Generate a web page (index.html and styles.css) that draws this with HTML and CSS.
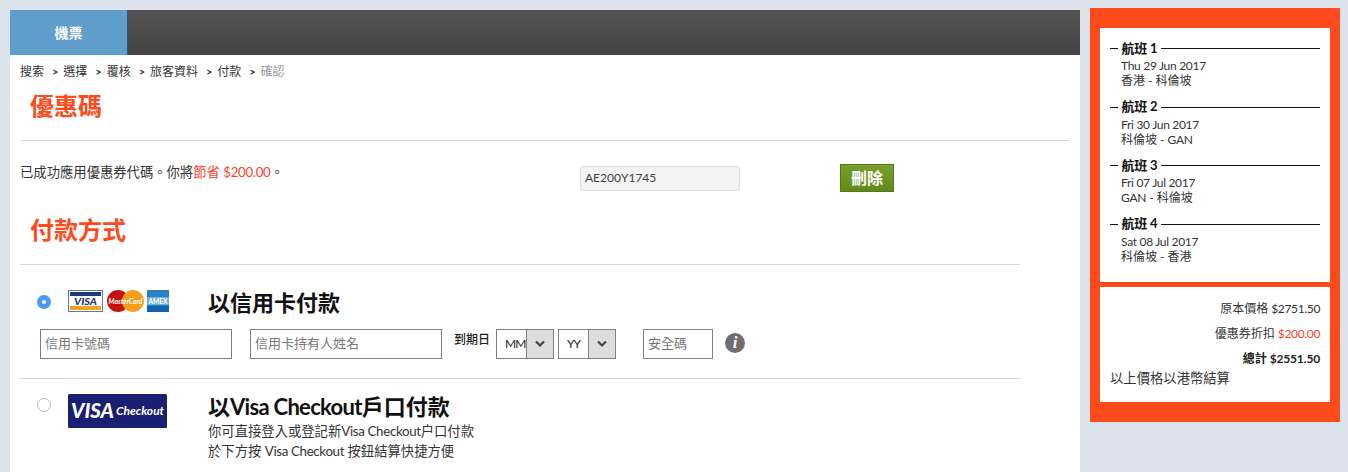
FILE: index.html
```html
<!DOCTYPE html>
<html lang="zh-Hant">
<head>
<meta charset="utf-8">
<title>付款</title>
<link rel="stylesheet" href="styles.css">
</head>
<body>
<div class="page">
  <main class="main">
    <nav class="tabs"><div class="tab">機票</div></nav>
    <div class="content">
      <ol class="crumbs">
        <li>搜索</li><li class="sep">&gt;</li><li>選擇</li><li class="sep">&gt;</li><li>覆核</li><li class="sep">&gt;</li><li>旅客資料</li><li class="sep">&gt;</li><li>付款</li><li class="sep">&gt;</li><li class="muted">確認</li>
      </ol>
      <h2 class="section-title title-coupon">優惠碼</h2>
      <hr class="rule rule-wide">
      <div class="coupon">
        <p class="coupon-msg">已成功應用優惠券代碼。你將<span class="red">節省 <span class="amt">$200.00</span></span>。</p>
        <div class="coupon-code">AE200Y1745</div>
        <button class="remove" type="button">刪除</button>
      </div>
      <h2 class="section-title title-pay">付款方式</h2>
      <hr class="rule">
      <section class="method method-card">
        <span class="radio radio-on"></span>
        <div class="logos">
          <svg width="35" height="22" viewBox="0 0 35 22"><rect width="35" height="22" fill="#fff"/><rect x=".5" y=".5" width="34" height="21" fill="none" stroke="#6b7590"/><rect x="2" y="2" width="31" height="4" fill="#1a3a78"/><rect x="2" y="16" width="31" height="4" fill="#f7a11c"/><text x="6" y="14.8" textLength="23" lengthAdjust="spacingAndGlyphs" class="visa-small">VISA</text></svg>
          <svg class="logo-mc" width="37" height="22" viewBox="0 0 37 22"><circle cx="11" cy="11" r="11" fill="#c4120c"/><circle cx="26" cy="11" r="11" fill="#f69e1d"/><text x="1.5" y="14" textLength="34" lengthAdjust="spacingAndGlyphs" class="mc-text">MasterCard</text></svg>
          <svg width="22" height="22" viewBox="0 0 22 22"><rect width="22" height="22" fill="#2a7fc0"/><rect y="7" width="22" height="8" fill="#6fb0dc"/><rect y="16" width="22" height="6" fill="#0f63a8"/><text x="1.5" y="13.8" textLength="19" lengthAdjust="spacingAndGlyphs" class="amex-text">AMEX</text></svg>
        </div>
        <div class="method-title">以信用卡付款</div>
      </section>
      <div class="card-form">
        <div class="field field-long">信用卡號碼</div>
        <div class="field field-long">信用卡持有人姓名</div>
        <span class="expiry-label">到期日</span>
        <div class="select"><span class="select-value">MM</span><span class="select-btn"><svg width="12" height="8" viewBox="0 0 12 8"><path d="M2 1.5l4 4 4-4" fill="none" stroke="#444" stroke-width="2.2"/></svg></span></div>
        <div class="select"><span class="select-value">YY</span><span class="select-btn"><svg width="12" height="8" viewBox="0 0 12 8"><path d="M2 1.5l4 4 4-4" fill="none" stroke="#444" stroke-width="2.2"/></svg></span></div>
        <div class="field field-cvv">安全碼</div>
        <span class="info">i</span>
      </div>
      <hr class="rule">
      <section class="method method-visa">
        <span class="radio"></span>
        <div class="logos">
          <svg width="99" height="34" viewBox="0 0 99 34"><rect width="99" height="34" rx="1.5" fill="#1a1f71"/><text x="3" y="23.5" textLength="43" lengthAdjust="spacingAndGlyphs" class="vc-visa">VISA</text><text x="48" y="20.5" textLength="48" lengthAdjust="spacingAndGlyphs" class="vc-check">Checkout</text></svg>
        </div>
        <div class="method-body">
          <div class="method-title">以<span class="latin-title">Visa Checkout</span>戶口付款</div>
          <p class="method-note">你可直接登入或登記新<span class="latin">Visa Checkout</span>户口付款</p>
          <p class="method-note">於下方按 <span class="latin">Visa Checkout</span> 按鈕結算快捷方便</p>
        </div>
      </section>
    </div>
  </main>
  <aside class="side">
    <div class="panel panel-legs">
      <div class="leg">
        <div class="leg-head"><span class="dash"></span><b>航班 1</b><span class="line"></span></div>
        <div class="leg-info"><span class="date">Thu 29 Jun 2017</span></div><div class="leg-info">香港 - 科倫坡</div>
      </div>
      <div class="leg">
        <div class="leg-head"><span class="dash"></span><b>航班 2</b><span class="line"></span></div>
        <div class="leg-info"><span class="date">Fri 30 Jun 2017</span></div><div class="leg-info">科倫坡 - <span class="date">GAN</span></div>
      </div>
      <div class="leg">
        <div class="leg-head"><span class="dash"></span><b>航班 3</b><span class="line"></span></div>
        <div class="leg-info"><span class="date">Fri 07 Jul 2017</span></div><div class="leg-info"><span class="date">GAN</span> - 科倫坡</div>
      </div>
      <div class="leg">
        <div class="leg-head"><span class="dash"></span><b>航班 4</b><span class="line"></span></div>
        <div class="leg-info"><span class="date">Sat 08 Jul 2017</span></div><div class="leg-info">科倫坡 - 香港</div>
      </div>
    </div>
    <div class="panel panel-price">
      <div class="price">原本價格 <span class="amt">$2751.50</span></div>
      <div class="price">優惠券折扣 <span class="red amt">$200.00</span></div>
      <div class="price price-total">總計 <span class="amt">$2551.50</span></div>
      <div class="price-note">以上價格以港幣結算</div>
    </div>
  </aside>
</div>
</body>
</html>
```
FILE: styles.css
```css
* { box-sizing: border-box; }
html, body { margin: 0; height: 472px; overflow: hidden; }
body {
  background: #dce3ea;
  color: #333;
  font: 12px/15px Lato, "Noto Sans CJK TC", sans-serif;
}
.page { display: flex; align-items: flex-start; padding-left: 10px; gap: 10px; }
.main { width: 1070px; height: 472px; margin-top: 10px; background: #fff; flex: none; }
.tabs { height: 45px; background: linear-gradient(#525352, #434445); }
.tab {
  width: 118px; height: 45px; background: #5f9ecb; border-right: 1px solid #2f5775;
  color: #fff; font-weight: 700; font-size: 14px; line-height: 45px; text-align: center;
}
.content { padding: 0 10px; }
.crumbs { display: flex; list-style: none; margin: 0; padding: 9px 0 0; line-height: 15px; color: #333; }
.crumbs .sep { width: 19.3px; padding-left: 8px; font-weight: 700; font-size: 11px; }
.crumbs .muted { color: #999; }
.section-title {
  margin: 0; padding-left: 10px; color: #ff4a1c; font-size: 24px; line-height: 30px; font-weight: 700;
}
.title-coupon { margin-top: 12px; }
.title-pay { margin-top: 22px; }
.rule { width: 1000px; height: 1px; border: 0; margin: 0; background: #d5d6d7; }
.rule-wide { width: 1050px; margin-top: 19px; }
.title-pay + .rule { margin-top: 19px; }
.coupon { display: flex; align-items: flex-start; height: 52px; padding-top: 23px; }
.coupon-msg { width: 560px; margin: 0; font-size: 13.33px; line-height: 17px; flex: none; }
.red { color: #fb3f2e; }
.amt { letter-spacing: -.35px; }
.coupon-code {
  width: 160px; height: 25px; margin-top: 2px; padding-left: 4px;
  background: #f3f3f3; border: 1px solid #ddd; border-radius: 3px; line-height: 21px; color: #444; flex: none;
}
.remove {
  width: 54px; height: 28px; margin-left: 100px; padding: 0; flex: none;
  background: linear-gradient(#789f2c, #5f8a1a); border: 1px solid #54771a; color: #fff;
  font: 700 16px/24px Lato, "Noto Sans CJK TC", sans-serif;
}
.method { display: flex; padding-left: 17px; }
.method-card { height: 64px; padding-top: 25px; }
.method-visa { padding-top: 15px; height: 93px; }
.radio {
  width: 14px; height: 14px; margin-top: 4px; border-radius: 50%; background: #fff; border: 1px solid #b8b8b8; flex: none;
}
.radio-on { margin-top: 5px; border: 5px solid #4a9afc; }
.logos { display: flex; gap: 4px; width: 140px; margin-left: 17px; flex: none; }
.logos svg { flex: none; }
.logo-mc { margin-right: -1px; }
.method-title { color: #111; font-weight: 700; font-size: 22px; line-height: 28px; }
.method-card .method-title { margin-top: -1px; }
.latin-title { letter-spacing: -.7px; }
.method-note { margin: 0; font-size: 13.33px; line-height: 20px; color: #333; }
.latin { letter-spacing: -.35px; }
.method-body { margin-top: -1px; }
.visa-small { font: italic 900 10px Lato, sans-serif; fill: #1a3a78; }
.mc-text { font: italic 700 7px Lato, sans-serif; fill: #fff; }
.amex-text { font: 700 7.5px Lato, sans-serif; fill: #fff; }
.vc-visa { font: italic 900 20px Lato, sans-serif; fill: #fff; }
.vc-check { font: italic 700 12px Lato, sans-serif; fill: #fff; }
.card-form { display: flex; align-items: flex-start; height: 49px; padding-left: 20px; }
.field {
  height: 30px; padding-left: 4px; border: 1px solid #808080; color: #777; background: #fff;
  font-size: 13px; line-height: 27px; flex: none;
}
.field-long { width: 192px; margin-right: 18px; }
.field-long + .expiry-label { margin-left: -6px; }
.expiry-label { width: 42px; margin-top: 3px; color: #222; line-height: 15px; font-weight: 500; flex: none; }
.select { display: flex; width: 58px; height: 30px; margin-right: 4px; border: 1px solid #808080; flex: none; color: #222; }
.select-value { flex: 1; padding-left: 8px; line-height: 28px; letter-spacing: -1px; }
.select-btn { display: flex; width: 27px; align-items: center; justify-content: center; background: #ddd; border-left: 1px solid #808080; flex: none; }
.select + .field-cvv { margin-left: 23px; }
.field-cvv { width: 70px; }
.info {
  width: 20px; height: 20px; margin: 4px 0 0 12px; border-radius: 50%; background: #6e6e6e; color: #fff;
  font: italic 700 17px/20px "Liberation Serif", serif; text-align: center; flex: none;
}
.side { width: 250px; height: 414px; margin-top: 8px; padding: 20px 10px; background: #ff4a1c; flex: none; }
.panel { background: #fff; }
.panel-legs { height: 254px; padding: 12px 10px 0; }
.panel-price { height: 115px; margin-top: 5px; padding: 14px 10px 0; }
.leg { height: 58.5px; }
.leg-head { display: flex; align-items: center; height: 17px; color: #111; font-size: 13px; }
.leg-head b { margin: 0 4px 1px 3.5px; letter-spacing: -.2px; }
.dash { width: 8px; height: 1px; background: #111; flex: none; }
.line { flex: 1; height: 1px; background: #111; }
.leg-info { padding-left: 11px; color: #333; line-height: 15px; }
.leg-head + .leg-info { margin-top: 1px; }
.leg-info + .leg-info { margin-top: 0; }
.date { letter-spacing: -.3px; }
.price { text-align: right; height: 25px; line-height: 15px; color: #333; }
.price-total { color: #222; font-weight: 700; height: 17px; }
.price-total .amt { letter-spacing: -.15px; }
.price-note { font-size: 13.33px; line-height: 20px; color: #333; }
```
